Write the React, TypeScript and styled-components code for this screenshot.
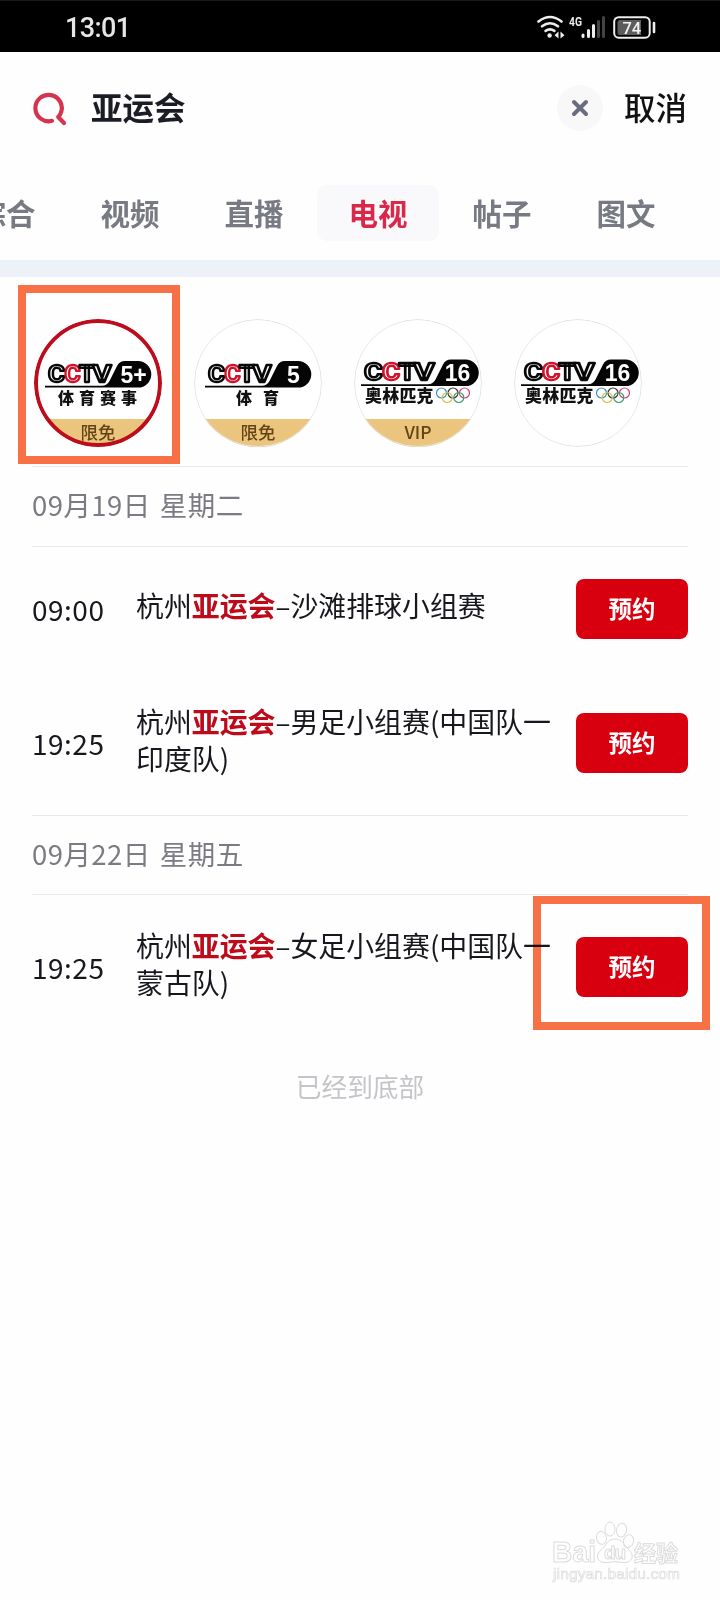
import React from 'react';
import styled, { createGlobalStyle } from 'styled-components';

const GlobalStyle = createGlobalStyle`
  * { box-sizing: border-box; }
  body {
    margin: 0;
    background: #fefefe;
    font-family: "Noto Sans CJK SC", "Noto Sans", sans-serif;
    color: #17181d;
  }
`;

const Screen = styled.div`
  position: relative;
  width: 720px;
  height: 1600px;
  overflow: hidden;
  background: #fefefe;
`;

const StatusBar = styled.div`
  height: 52px;
  padding: 0 64px 0 65px;
  background: #000;
  border-top: 1px solid #161a19;
  display: flex;
  align-items: center;
  justify-content: space-between;
`;

const Clock = styled.span`
  font: 500 27px/30px Roboto, sans-serif;
  letter-spacing: -0.6px;
  color: #e6e6e6;
  padding-top: 3px;
`;

const SearchBar = styled.header`
  height: 112px;
  padding: 0 33px 0 32px;
  display: flex;
  align-items: center;
`;

const Query = styled.div`
  flex: 1;
  margin: -4px 0 0 24px;
  font-size: 31.5px;
  line-height: 46px;
  font-weight: 700;
  color: #1b1c26;
`;

const ClearButton = styled.button`
  width: 46px;
  height: 46px;
  padding: 0;
  border: 0;
  border-radius: 50%;
  background: #f8f8f9;
  display: flex;
  align-items: center;
  justify-content: center;
`;

const Cancel = styled.span`
  margin: -4px 0 0 21px;
  font-size: 31.5px;
  line-height: 46px;
  font-weight: 500;
  color: #111;
`;

const Tabs = styled.nav`
  height: 96px;
  padding: 21px 0 0;
  margin-left: -55px;
  display: flex;
  gap: 2px;
`;

const Tab = styled.span<{ $active?: boolean }>`
  flex: none;
  width: 122px;
  height: 56px;
  border-radius: 10px;
  font-size: 29.5px;
  line-height: 55px;
  font-weight: 700;
  text-align: center;
  color: ${(p) => (p.$active ? '#d9284a' : '#787a83')};
  background: ${(p) => (p.$active ? '#f9f9fb' : 'transparent')};
`;

const Band = styled.div`
  height: 17px;
  background: #edf1f8;
`;

const Channels = styled.div`
  height: 189px;
  padding: 42px 34px 0;
  display: flex;
  gap: 32px;
`;

const Channel = styled.div<{ $active?: boolean }>`
  position: relative;
  flex: none;
  width: 128px;
  height: 128px;
  border-radius: 50%;
  overflow: hidden;
  background: #fff;

  &::after {
    content: '';
    position: absolute;
    inset: 0;
    border-radius: 50%;
    border: ${(p) => (p.$active ? '4px solid #bd0c1d' : '1.5px solid #e4e4e6')};
  }
`;

const Badge = styled.div`
  position: absolute;
  left: 0;
  right: 0;
  top: 100px;
  bottom: 0;
  background: #ebc47d;
  color: #644414;
  font-size: 17.5px;
  font-weight: 500;
  line-height: 26px;
  text-align: center;
`;

const Schedule = styled.main`
  margin: 0 32px;
`;

const DateRow = styled.div`
  height: 80.5px;
  border-top: 1px solid #e9e9ea;
  border-bottom: 1px solid #e9e9ea;
  font-size: 27.5px;
  line-height: 75px;
  letter-spacing: 0.45px;
  word-spacing: 2.5px;
  color: #7b7b83;
`;

const Programme = styled.div`
  padding: 35px 0;
  display: flex;
  align-items: center;
`;

const Time = styled.span`
  width: 104px;
  flex: none;
  font-size: 28px;
  line-height: 36px;
  letter-spacing: 0.5px;
`;

const Title = styled.div`
  flex: 1;
  margin: -3px 0 3px;
  font-size: 27.9px;
  line-height: 37px;
  white-space: pre-line;
`;

const Keyword = styled.b`
  font-weight: 700;
  color: #be0b1b;
`;

const Reserve = styled.button`
  flex: none;
  width: 112px;
  height: 60px;
  margin: -3px 0;
  padding: 0 0 2px;
  border: 0;
  border-radius: 8px;
  background: #d8000f;
  color: #fff;
  font-family: inherit;
  font-weight: 700;
  font-size: 23.5px;
  line-height: 58px;
`;

const Footer = styled.div`
  margin-top: 28px;
  text-align: center;
  font-size: 25.7px;
  line-height: 38px;
  color: #c5c5c9;
`;

const Marker = styled.div<{ $x: number; $y: number; $w: number; $h: number }>`
  position: absolute;
  left: ${(p) => p.$x}px;
  top: ${(p) => p.$y}px;
  width: ${(p) => p.$w}px;
  height: ${(p) => p.$h}px;
  border: 8.5px solid #f97146;
  mix-blend-mode: multiply;
`;

const WatermarkArt = styled.svg`
  position: absolute;
  left: 545px;
  top: 1515px;
`;

function StatusIcons() {
  return (
    <svg width="120" height="28" viewBox="536 12 120 28" fill="none">
      <g stroke="#ededed" strokeWidth="2.6" strokeLinecap="round">
        <path d="M538.5 20.5Q550 11.5 561.5 20.5" />
        <path d="M542 25.3Q550 19.2 558 25.3" />
        <path d="M545.6 29.9Q550 26.9 554.4 29.9" />
      </g>
      <circle cx="549.6" cy="34.5" r="2.2" fill="#ededed" />
      <path d="M558.5 30.5v7l-4-3.2zM560.5 30.5v7l4-3.2z" fill="#ededed" />
      <text x="569" y="24.5" fill="#ededed" fontFamily="Roboto" fontWeight="700" fontSize="12.5" textLength="13" lengthAdjust="spacingAndGlyphs">4G</text>
      <g strokeWidth="3" strokeLinecap="round">
        <path d="M583 34v1.5M588.5 29.5v6M593.5 24.5v11" stroke="#ededed" />
        <path d="M598.5 20.5v15M603.5 16.5v19" stroke="#444" />
      </g>
      <rect x="614.2" y="16.2" width="35.5" height="20.5" rx="4.5" stroke="#ededed" strokeWidth="2" />
      <path d="M620 19h21v15h-21q-2.5 0-2.5-2.5v-10q0-2.5 2.5-2.5z" fill="#5c5c5c" />
      <text x="631.8" y="32.5" fill="#f2f2f2" textAnchor="middle" fontFamily="Roboto" fontWeight="500" fontSize="16.5">74</text>
      <path d="M654 22v9" stroke="#ededed" strokeWidth="2.6" strokeLinecap="round" />
    </svg>
  );
}

function SearchIcon() {
  return (
    <svg width="35" height="35" viewBox="0 0 35 35" fill="none" stroke="#d6334d" strokeWidth="4.2" strokeLinecap="round" strokeLinejoin="round">
      <path d="M20 29.8A13.2 13.2 0 1 1 28.6 22.5Q27.6 25 26.2 26L32 32" />
    </svg>
  );
}

function CloseIcon() {
  return (
    <svg width="18" height="18" viewBox="0 0 18 18" stroke="#6c6c80" strokeWidth="4" strokeLinecap="round">
      <path d="M3 3l12 12M15 3L3 15" />
    </svg>
  );
}

function Rings() {
  return (
    <g fill="none" strokeWidth="1.2">
      <circle cx="87.5" cy="74" r="5" stroke="#3b93c0" />
      <circle cx="99" cy="74" r="5" stroke="#333" />
      <circle cx="110.5" cy="74" r="5" stroke="#d0466a" />
      <circle cx="93.2" cy="78.5" r="5" stroke="#dcc04a" />
      <circle cx="104.8" cy="78.5" r="5" stroke="#3fa077" />
    </g>
  );
}

type LogoProps = { number: string; name: string; wide?: boolean };

const LETTERS = [
  { c: 'C', x: 14, w: 17 },
  { c: 'C', x: 30.5, w: 16 },
  { c: 'T', x: 45, w: 16 },
  { c: 'V', x: 58.5, w: 19 },
];

function ChannelLogo({ number, name, wide }: LogoProps) {
  const left = wide ? 7 : 11;
  const right = wide ? 124.5 : 117;
  const slant = wide ? 79 : 73;
  const chars = name.split('');
  const pitch = wide ? 17.2 : chars.length === 4 ? 21 : 27;
  const first = wide ? 19.5 : chars.length === 4 ? 32 : 50;
  return (
    <svg width="128" height="128" viewBox="0 0 128 128">
      <g transform={`translate(0 ${wide ? -1.5 : 0})`}>
        <g
          transform={wide ? 'translate(-5.5 0) scale(1.11 1)' : undefined}
          fontFamily="Roboto"
          fontWeight="700"
          fontSize="24"
          strokeWidth="2.3"
          strokeLinejoin="round"
        >
          {LETTERS.map((l, i) => (
            <text key={i} x={l.x} y="62.5" textLength={l.w} lengthAdjust="spacingAndGlyphs" fill="#fff" stroke={i === 1 ? '#d0142c' : '#080808'}>
              {l.c}
            </text>
          ))}
        </g>
        <path
          d={`M${left} 66.8H${slant - 5}Q${slant} 66.5 ${slant + 2.5} 62L${slant + 10} 47Q${slant + 12.5} 42 ${slant + 18} 42H${right - 13}a13.3 13.3 0 0 1 0 26.6H${left}z`}
          fill="#050505"
        />
        <text x={wide ? 103.5 : 99.5} y="63.5" fill="#fff" textAnchor="middle" fontFamily="Liberation Sans" fontWeight="700" fontSize="23">
          {number}
        </text>
      </g>
      <g fontFamily="Noto Sans CJK SC" fontWeight="900" fontSize={wide ? 17 : 16} fill="#111" textAnchor="middle">
        {chars.map((c, i) => (
          <text key={c} x={first + i * pitch} y={wide ? 82.5 : 85}>{c}</text>
        ))}
      </g>
      {wide && <Rings />}
    </svg>
  );
}

type Item = { time: string; title: string };

function ProgrammeRow({ time, title }: Item) {
  return (
    <Programme>
      <Time>{time}</Time>
      <Title>杭州<Keyword>亚运会</Keyword>–{title}</Title>
      <Reserve>预约</Reserve>
    </Programme>
  );
}

function Watermark() {
  return (
    <WatermarkArt width="150" height="80" viewBox="545 1515 150 80" fill="none" stroke="#dcdcdc" strokeWidth="1">
      <text x="552" y="1562" fontFamily="Liberation Sans" fontWeight="700" fontSize="29" textLength="44" lengthAdjust="spacingAndGlyphs">Bai</text>
      <ellipse cx="601.5" cy="1538" rx="5" ry="6.5" transform="rotate(-12 601 1538)" />
      <ellipse cx="610" cy="1529" rx="5" ry="7" />
      <ellipse cx="621.5" cy="1530" rx="5" ry="7" transform="rotate(10 621 1530)" />
      <ellipse cx="628.5" cy="1541" rx="5" ry="6.5" transform="rotate(14 628 1541)" />
      <path d="M615 1539c-8 0-9 7-14 11-6 5-4 12 3 12.5 4 .3 7-.8 11-.8s8 1.3 12 .6c6-1 7-8 2-12.3-5-4-6-11-14-11z" />
      <text x="604" y="1559" fontFamily="Liberation Sans" fontWeight="700" fontSize="19" textLength="22">du</text>
      <text x="634" y="1560.5" fontFamily="Noto Sans CJK SC" fontWeight="700" fontSize="22">经验</text>
      <text x="553" y="1579" fontFamily="Liberation Sans" fontSize="15.5" textLength="127" strokeWidth=".7">jingyan.baidu.com</text>
    </WatermarkArt>
  );
}

export default function App() {
  return (
    <Screen>
      <GlobalStyle />
      <StatusBar>
        <Clock>13:01</Clock>
        <StatusIcons />
      </StatusBar>
      <SearchBar>
        <SearchIcon />
        <Query>亚运会</Query>
        <ClearButton aria-label="清除"><CloseIcon /></ClearButton>
        <Cancel>取消</Cancel>
      </SearchBar>
      <Tabs>
        {['综合', '视频', '直播', '电视', '帖子', '图文'].map((t) => (
          <Tab key={t} $active={t === '电视'}>{t}</Tab>
        ))}
      </Tabs>
      <Band />
      <Channels>
        <Channel $active>
          <ChannelLogo number="5+" name="体育赛事" />
          <Badge>限免</Badge>
        </Channel>
        <Channel>
          <ChannelLogo number="5" name="体育" />
          <Badge>限免</Badge>
        </Channel>
        <Channel>
          <ChannelLogo number="16" name="奥林匹克" wide />
          <Badge>VIP</Badge>
        </Channel>
        <Channel>
          <ChannelLogo number="16" name="奥林匹克" wide />
        </Channel>
      </Channels>
      <Schedule>
        <DateRow>09月19日 星期二</DateRow>
        <ProgrammeRow time="09:00" title="沙滩排球小组赛" />
        <ProgrammeRow time="19:25" title={'男足小组赛(中国队一\n印度队)'} />
        <DateRow>09月22日 星期五</DateRow>
        <ProgrammeRow time="19:25" title={'女足小组赛(中国队一\n蒙古队)'} />
      </Schedule>
      <Footer>已经到底部</Footer>
      <Marker $x={18} $y={285} $w={162} $h={179} />
      <Marker $x={533} $y={896} $w={177} $h={134} />
      <Watermark />
    </Screen>
  );
}
